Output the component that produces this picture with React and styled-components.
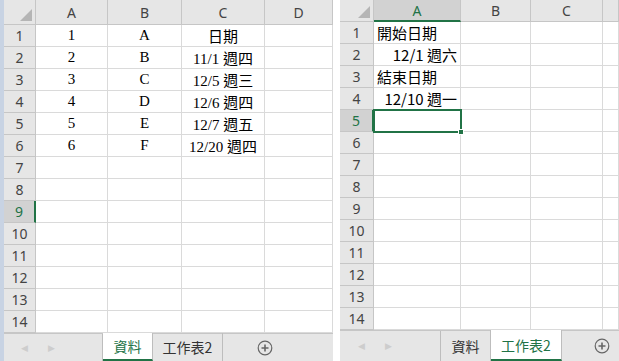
import { Fragment } from "react";
import styled, { createGlobalStyle } from "styled-components";

const Global = createGlobalStyle`
  html, body { margin: 0; padding: 0; background: #fff; }
  * { box-sizing: border-box; }
`

const GREEN = "#217346";

const Page = styled.div`
  display: flex;
  gap: 7px;
  width: 619px;
  height: 361px;
  overflow: hidden;
  background: #fff;
`
const Panel = styled.div`
  display: flex;
  width: ${p => p.$width}px;
  height: 361px;
`
const Strip = styled.div`
  width: 4px;
  background: #c8d3e3;
`
const Sheet = styled.div`
  flex: 1;
  display: flex;
  flex-direction: column;
  overflow: hidden;
`
const Grid = styled.div`
  display: grid;
  grid-template-columns: ${p => p.$cols.map(c => c + "px").join(" ")};
  grid-template-rows: ${p => p.$head}px repeat(14, 22px);
`
const Corner = styled.div`
  position: relative;
  background: #e6e6e6;
  border-right: 1px solid #c6c6c6;
  border-bottom: 1px solid #c6c6c6;
  &::after {
    content: "";
    position: absolute;
    right: 3px;
    bottom: 3px;
    border-left: 12px solid transparent;
    border-bottom: 12px solid #b5b5b5;
  }
`
const ColHead = styled.div`
  display: flex;
  align-items: center;
  justify-content: center;
  font-family: "Noto Sans", "Liberation Sans", sans-serif;
  font-size: 14px;
  background: ${p => (p.$on ? "#d2d2d2" : "#e6e6e6")};
  border-right: 1px solid #c6c6c6;
  border-bottom: ${p => (p.$on ? `2px solid ${GREEN}` : "1px solid #c6c6c6")};
  color: ${p => (p.$on ? GREEN : "#444")};
`
const RowHead = styled.div`
  display: flex;
  align-items: center;
  justify-content: center;
  font-family: "Noto Sans", "Liberation Sans", sans-serif;
  font-size: 14px;
  background: ${p => (p.$on ? "#d2d2d2" : "#e6e6e6")};
  color: ${p => (p.$on ? GREEN : "#444")};
  border-bottom: 1px solid #c6c6c6;
  border-right: ${p => (p.$on ? `2px solid ${GREEN}` : "1px solid #c6c6c6")};
`
const Cell = styled.div`
  position: relative;
  display: flex;
  align-items: center;
  justify-content: ${p => p.$align};
  padding: 0 3px;
  white-space: nowrap;
  font-family: ${p => p.$font};
  font-size: 15px;
  color: #000;
  border-right: 1px solid #dadada;
  border-bottom: 1px solid #dadada;
  ${p => p.$sel && `
    outline: 2px solid ${GREEN};
    outline-offset: -1px;
    z-index: 1;
  `}
`
const Handle = styled.span`
  position: absolute;
  right: -4px;
  bottom: -4px;
  width: 6px;
  height: 6px;
  background: ${GREEN};
  border: 1px solid #fff;
`
const TabBar = styled.div`
  flex: 1;
  display: flex;
  align-items: stretch;
  background: #e6e6e6;
  border-top: 1px solid #c6c6c6;
`
const Nav = styled.div`
  width: ${p => p.$w}px;
  display: flex;
  align-items: center;
  justify-content: center;
  gap: 20px;
  color: #cdcdcd;
  font-size: 9px;
  border-right: 1px solid #bdbdbd;
  padding-right: 30px;
`
const Tab = styled.div`
  width: ${p => p.$w}px;
  display: flex;
  align-items: center;
  justify-content: center;
  margin-top: -1px;
  font-family: "Noto Sans CJK TC", sans-serif;
  font-size: 14px;
  color: ${p => (p.$active ? GREEN : "#333")};
  background: ${p => (p.$active ? "#fff" : "transparent")};
  border-right: 1px solid #bdbdbd;
  border-bottom: ${p => (p.$active ? `2px solid ${GREEN}` : "none")};
`
const Add = styled.div`
  display: flex;
  align-items: center;
  margin-left: ${p => p.$ml}px;
`

const serif = `"Liberation Serif", "Noto Sans CJK TC", serif`;
const sans = `"Noto Sans CJK TC", "Noto Sans", sans-serif`;

function PlusIcon() {
  return (
    <svg width="16" height="16" viewBox="0 0 16 16">
      <circle cx="8" cy="8" r="6.8" fill="none" stroke="#666" strokeWidth="1.2" />
      <path d="M8 4.5v7M4.5 8h7" stroke="#666" strokeWidth="1.6" />
    </svg>
  );
}

function Spreadsheet({ cols, letters, head, data, font, align, selRow, selCell, selCol, navW, tabs, addMl }) {
  return (
    <Sheet>
      <Grid $cols={cols} $head={head}>
        <Corner />
        {letters.map((l, i) => (
          <ColHead key={"c" + i} $on={selCol === i}>{l}</ColHead>
        ))}
        {Array.from({ length: 14 }, (_, r) => (
          <Fragment key={r}>
            <RowHead $on={selRow === r + 1}>{r + 1}</RowHead>
            {letters.map((l, c) => {
              const v = data[r] && data[r][c];
              const text = v ? v.t : "";
              const al = v && v.a ? v.a : align[c] || "flex-start";
              const sel = selCell && selCell[0] === r + 1 && selCell[1] === c;
              return (
                <Cell key={c} $align={al} $font={font} $sel={sel}>
                  {text}
                  {sel && <Handle />}
                </Cell>
              );
            })}
          </Fragment>
        ))}
      </Grid>
      <TabBar>
        <Nav $w={navW}>
          <span>◀</span>
          <span>▶</span>
        </Nav>
        {tabs.map(t => (
          <Tab key={t.name} $w={t.w} $active={t.active}>{t.name}</Tab>
        ))}
        <Add $ml={addMl}><PlusIcon /></Add>
      </TabBar>
    </Sheet>
  );
}

const leftData = [
  [{ t: "1" }, { t: "A" }, { t: "日期" }],
  [{ t: "2" }, { t: "B" }, { t: "11/1 週四" }],
  [{ t: "3" }, { t: "C" }, { t: "12/5 週三" }],
  [{ t: "4" }, { t: "D" }, { t: "12/6 週四" }],
  [{ t: "5" }, { t: "E" }, { t: "12/7 週五" }],
  [{ t: "6" }, { t: "F" }, { t: "12/20 週四" }],
];

const rightData = [
  [{ t: "開始日期" }],
  [{ t: "12/1 週六", a: "flex-end" }],
  [{ t: "結束日期" }],
  [{ t: "12/10 週一", a: "flex-end" }],
];

export default function App() {
  return (
    <Page>
      <Global />
      <Panel $width={333}>
        <Strip />
        <Spreadsheet
          cols={[32, 72, 74, 83, 68]}
          letters={["A", "B", "C", "D"]}
          head={25}
          data={leftData}
          font={serif}
          align={["center", "center", "center", "center"]}
          selRow={9}
          navW={99}
          tabs={[
            { name: "資料", w: 50, active: true },
            { name: "工作表2", w: 70 },
          ]}
          addMl={34}
        />
      </Panel>
      <Panel $width={279}>
        <Spreadsheet
          cols={[34, 87, 70, 72, 16]}
          letters={["A", "B", "C", ""]}
          head={22}
          data={rightData}
          font={sans}
          align={[]}
          selRow={5}
          selCol={0}
          selCell={[5, 0]}
          navW={101}
          tabs={[
            { name: "資料", w: 50 },
            { name: "工作表2", w: 71, active: true },
          ]}
          addMl={32}
        />
      </Panel>
    </Page>
  );
}
